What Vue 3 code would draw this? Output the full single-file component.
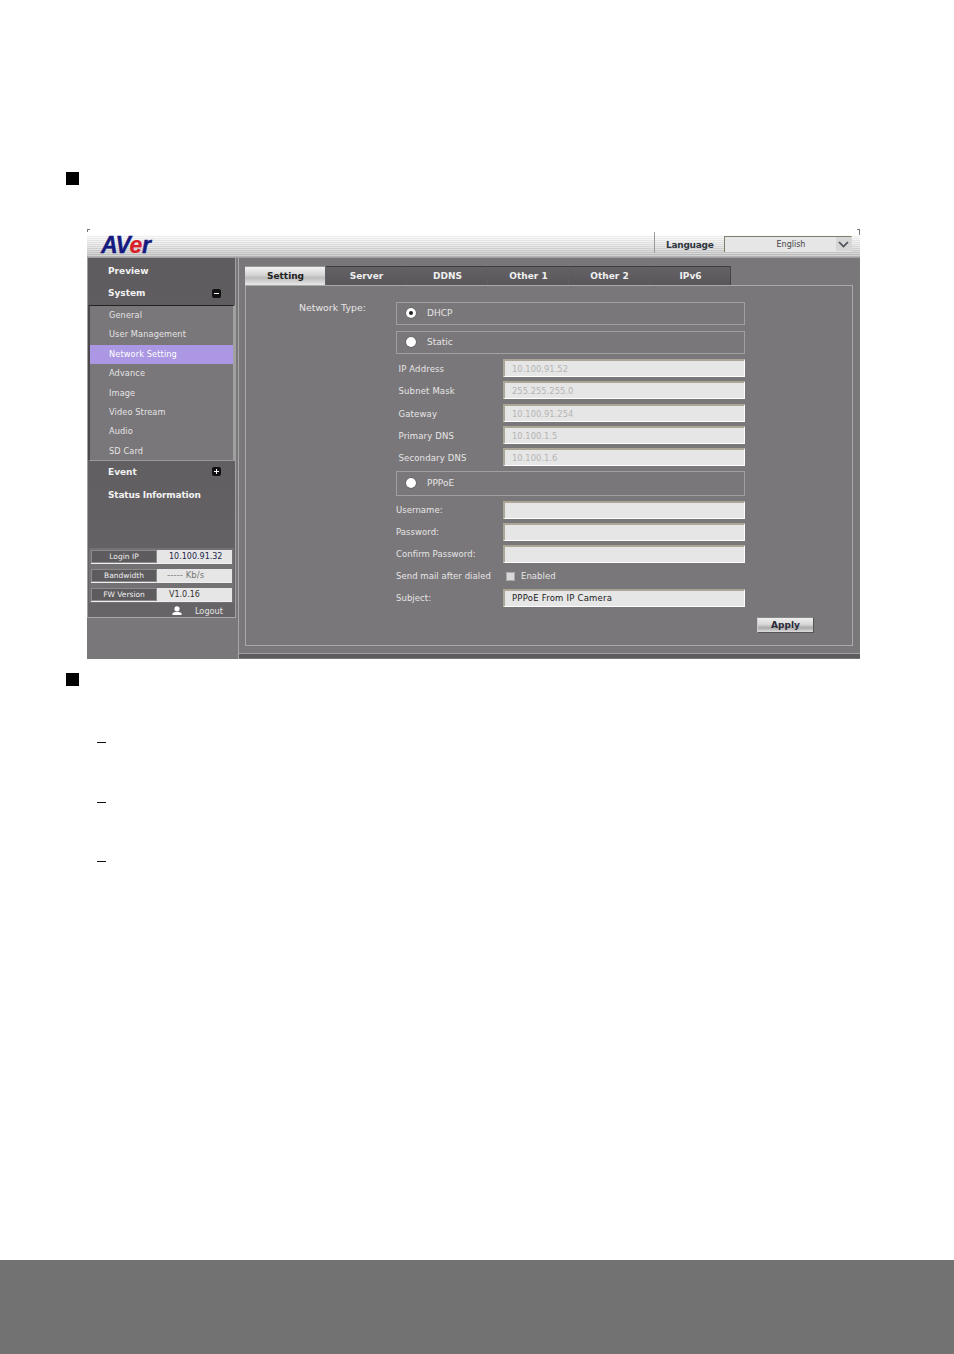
<script setup>
const subs = [
  { t: 'General' }, { t: 'User Management' }, { t: 'Network Setting', on: true }, { t: 'Advance' },
  { t: 'Image' }, { t: 'Video Stream' }, { t: 'Audio' }, { t: 'SD Card' }
]
const tabs = ['Setting', 'Server', 'DDNS', 'Other 1', 'Other 2', 'IPv6']
const net = [
  ['IP Address', '10.100.91.52'], ['Subnet Mask', '255.255.255.0'], ['Gateway', '10.100.91.254'],
  ['Primary DNS', '10.100.1.5'], ['Secondary DNS', '10.100.1.6']
]
</script>

<template>
  <div class="page">
    <main class="doc">
      <div class="bullet first"></div>
      <section class="app">
        <div class="ticks"><i class="tick"></i><i class="tick r"></i></div>
        <header class="head">
          <div class="logo">AV<span class="e">e</span>r</div>
          <div class="lang">
            <span class="lang-label">Language</span>
            <div class="select"><span class="sel-text">English</span>
              <span class="sel-btn"><svg width="11" height="7" viewBox="0 0 11 7"><path d="M1 1l4.5 4.5L10 1" fill="none" stroke="#4a4e56" stroke-width="1.7"/></svg></span>
            </div>
          </div>
        </header>
        <div class="body">
          <aside class="side">
            <div class="side-box">
              <div class="nav">Preview</div>
              <div class="nav sys">System<span class="sq"><b class="h"></b></span></div>
              <ul class="subs">
                <li v-for="s in subs" :key="s.t" :class="{ on: s.on }">{{ s.t }}</li>
              </ul>
              <div class="nav ev">Event<span class="sq"><b class="h"></b><b class="v"></b></span></div>
              <div class="nav status">Status Information</div>
              <div class="info">
                <div class="irow"><span class="ik">Login IP</span><span class="iv dark">10.100.91.32</span></div>
                <div class="irow"><span class="ik">Bandwidth</span><span class="iv kb">----- Kb/s</span></div>
                <div class="irow"><span class="ik">FW Version</span><span class="iv">V1.0.16</span></div>
              </div>
              <div class="logout">
                <svg width="10" height="9" viewBox="0 0 10 9"><circle cx="5" cy="2.8" r="2.6" fill="#fff"/><path d="M.5 9V7.6C.5 6.6 2.2 6 5 6s4.500 .6 4.500 1.600V9z" fill="#fff"/></svg>
                <span>Logout</span>
              </div>
            </div>
          </aside>
          <section class="main">
            <nav class="tabs">
              <span v-for="(t, i) in tabs" :key="t" class="tab" :class="{ active: i === 0 }">{{ t }}</span>
            </nav>
            <div class="panel">
              <div class="type-label">Network Type:</div>
              <div class="form">
                <div class="opt"><i class="radio sel"></i>DHCP</div>
                <div class="opt gap6"><i class="radio"></i>Static</div>
                <div v-for="n in net" :key="n[0]" class="row net">
                  <label>{{ n[0] }}</label>
                  <div class="inp muted">{{ n[1] }}</div>
                </div>
                <div class="opt pp"><i class="radio"></i>PPPoE</div>
                <div class="row first-pp"><label>Username:</label><div class="inp"></div></div>
                <div class="row"><label>Password:</label><div class="inp"></div></div>
                <div class="row"><label>Confirm Password:</label><div class="inp"></div></div>
                <div class="row check"><label>Send mail after dialed</label><i class="cb"></i><span>Enabled</span></div>
                <div class="row subj"><label>Subject:</label><div class="inp filled">PPPoE From IP Camera</div></div>
                <div class="actions"><button class="apply" type="button">Apply</button></div>
              </div>
            </div>
            <div class="band"></div>
          </section>
        </div>
      </section>
      <div class="bullet second"></div>
      <div class="dash d1"></div>
      <div class="dash d2"></div>
      <div class="dash d3"></div>
    </main>
    <footer class="foot"></footer>
  </div>
</template>

<style>
html, body { margin: 0; background: #fff; }
</style>

<style scoped>
.page { width: 954px; height: 1354px; display: flex; flex-direction: column; background: #fff; font-family: "DejaVu Sans", Verdana, sans-serif; overflow: hidden; }
.doc { height: 1260px; padding-top: 172px; box-sizing: border-box; }
.foot { height: 94px; background: #727272; }
.bullet { width: 13px; height: 13px; background: #000; margin-left: 66px; }
.second { margin-top: 14px; }
.dash { width: 9px; height: 1px; background: #111; margin-left: 97px; }
.d1 { margin-top: 56px; }
.d2 { margin-top: 59px; }
.d3 { margin-top: 58px; }

.app { width: 773px; height: 430px; margin: 44px 0 0 87px; display: flex; flex-direction: column; }
.ticks { height: 6px; display: flex; justify-content: space-between; }
.tick { width: 2px; height: 2px; border-left: 1px solid #777; border-top: 1px solid #777; }
.tick.r { border-left: 0; border-right: 1px solid #777; height: 5px; }

.head { height: 23px; display: flex; justify-content: space-between; background: repeating-linear-gradient(180deg, rgba(255,255,255,.35) 0 1px, rgba(0,0,0,.03) 1px 2px), linear-gradient(180deg, #fafafa 0%, #e2e2e2 45%, #b8b8b8 100%); border-bottom: 1px solid #a0a0a0; box-sizing: border-box; }
.logo { margin-left: 14px; width: 60px; font: italic 700 23px/20px "Liberation Sans", sans-serif; letter-spacing: -.4px; color: #141a80; -webkit-text-stroke: .4px #141a80; }
.e { color: #d9202a; -webkit-text-stroke: .2px #d9202a; }
.lang { display: flex; align-items: flex-start; }
.lang-label { width: 70px; height: 21px; margin-top: -3px; padding: 3px 0 0 11px; box-sizing: border-box; border-left: 1px solid #9a9a9a; font-size: 9px; font-weight: 700; letter-spacing: -.27px; line-height: 21px; color: #2f3640; }
.select { width: 128px; height: 16px; margin: 1px 8px 0 0; display: flex; background: #e6e6e6; border-top: 1px solid #7f7d68; border-left: 1px solid #7f7d68; border-right: 1px solid #d8d8d8; box-sizing: border-box; }
.sel-text { flex: 1; font-size: 8px; line-height: 15px; text-align: center; color: #444; padding-left: 21px; }
.sel-btn { width: 15px; height: 14px; background: #d6d6d6; display: flex; align-items: center; justify-content: center; }

.body { flex: 1; display: flex; background: #7a777a; min-height: 0; }
.side { width: 149px; flex: none; }
.side-box { height: 360px; box-sizing: border-box; background: linear-gradient(180deg, #5e5c5f, #625f62 60%, #676467); border-left: 1px solid #a0a0a0; border-right: 1px solid #a0a0a0; border-bottom: 1px solid #a8a8a8; padding-top: 2px; }
.nav { height: 22px; box-sizing: border-box; padding: 0 13px 0 20px; display: flex; justify-content: space-between; align-items: center; font-size: 9px; font-weight: 700; color: #f2f2f2; white-space: nowrap; }
.nav.sys { height: 23px; padding-bottom: 1px; }
.status { letter-spacing: -.17px; height: 23px; }
.sq { width: 9px; height: 9px; background: #111; border-radius: 2px; border: 0; position: relative; margin-right: 1px; }
.sq b { position: absolute; background: #fff; }
.sq .h { left: 2px; right: 2px; top: 4px; height: 1px; }
.sq .v { left: 4px; top: 2px; bottom: 2px; width: 1px; }
.subs { list-style: none; margin: 0; padding: 0; height: 156px; background: #7a777a; border-top: 1px solid #222; border-left: 2px solid #4a484b; border-right: 2px solid #a0a0a0; border-bottom: 1px solid #999; box-sizing: border-box; }
.subs li { height: 19.4px; padding-left: 19px; font-size: 8.2px; letter-spacing: .12px; line-height: 19.4px; color: #e4e4e4; white-space: nowrap; }
.subs li.on { background: #ab97e4; color: #fff; }
.ev { height: 23px; margin-top: -1px; }
.info { margin: 42px 1px 0; height: 55px; padding: 2px 2px; background: #747174; box-sizing: border-box; display: flex; flex-direction: column; gap: 5px; }
.irow { height: 14px; display: flex; border-bottom: 1px solid #eee; font-size: 7.5px; line-height: 13px; }
.ik { width: 66px; background: #5d5b5e; color: #eee; text-align: center; border: 1px solid #8b8b8b; box-sizing: border-box; line-height: 11px; white-space: nowrap; }
.iv { flex: 1; background: #e6e6e6; padding-left: 12px; color: #333; font-size: 8px; white-space: nowrap; }
.iv.dark { color: #22244a; }
.iv.kb { color: #777; padding-left: 10px; font-size: 8.5px; letter-spacing: .1px; }
.logout { height: 15px; display: flex; justify-content: flex-end; align-items: center; gap: 13px; padding-right: 12px; font-size: 8.2px; color: #e4e4e4; }

.main { flex: 1; position: relative; border-left: 1px solid #a8a8a8; margin-left: 2px; box-sizing: border-box; padding: 8px 0 0 6px; display: flex; flex-direction: column; }
.tabs { height: 19px; display: flex; }
.tab { width: 81px; padding-left: 1px; text-align: center; font: 700 9px/19px "DejaVu Sans", sans-serif; color: #f0f0f0; background: linear-gradient(180deg, #646265, #58565a); border-top: 1px solid #3e3c3f; box-sizing: border-box; border-right: 1px solid #605e62; }
.tab:last-child { border-right: 1px solid #444; }
.tab.active { color: #222; background: linear-gradient(180deg, #f2f2f2 0%, #d4d4d4 45%, #bcbcbc 60%, #e8e8e8 100%); border-top: 1px solid #999; }
.panel { width: 608px; height: 361px; box-sizing: border-box; border: 1px solid #a9a9a9; display: flex; padding: 16px 0 0 53px; }
.type-label { width: 97px; font-size: 9.4px; line-height: 11px; color: #e6e6e6; white-space: nowrap; }
.form { width: 349px; display: flex; flex-direction: column; }
.opt { height: 20px; padding-bottom: 1px; width: 337px; border: 1px solid #a0a0a0; box-sizing: content-box; display: flex; align-items: center; font-size: 9px; color: #e6e6e6; padding-left: 10px; margin-right: -10px; gap: 10px; }
.gap6 { margin-top: 6px; }
.pp { margin-top: 4.7px; height: 23px; padding-bottom: 0; }
.radio { width: 10px; height: 10px; margin-left: -1px; margin-right: 1px; border-radius: 50%; background: #fff; box-shadow: 0 0 0 .5px #555; display: flex; align-items: center; justify-content: center; flex: none; }
.radio.sel::after { content: ""; width: 4px; height: 4px; border-radius: 50%; background: #222; }
.row { display: flex; align-items: center; height: 18px; margin-top: 4.2px; font-size: 8.5px; letter-spacing: .05px; color: #e6e6e6; }
.row.net { margin-top: 4.3px; }
.row.net:nth-child(3) { margin-top: 5px; }
.row label { width: 107px; flex: none; white-space: nowrap; }
.net label { padding-left: 2.5px; width: 104.5px; letter-spacing: .15px; margin-top: 2px; }
.inp { flex: 1; height: 18px; box-sizing: border-box; margin-left: 0; background: #e6e6e6; border-top: 2px solid #aca697; border-left: 2px solid #aca697; border-right: 1px solid #fff; border-bottom: 1px solid #fff; padding-left: 7px; font-size: 8.3px; line-height: 16px; color: #b4b4b4; white-space: nowrap; }
.first-pp { margin-top: 5px; }
.check { height: 14px; margin-top: 6px; }
.cb { width: 9px; height: 9px; margin-left: 3px; background: #d8d8d8; border: 1px solid #aaa; box-sizing: border-box; }
.check span { margin-left: 6px; }
.subj { margin-top: 6px; }
.filled { color: #222; font-size: 8.5px; line-height: 15px; letter-spacing: .22px; }
.actions { display: flex; justify-content: flex-end; margin: 10px -69px 0 0; }
.apply { width: 57px; height: 16px; padding: 0; border: 1px solid #555; border-top-color: #888; border-left-color: #ccc; background: linear-gradient(180deg, #eee 0%, #d8d8d8 45%, #aaa 70%, #ddd 100%); font: 700 9px/14px "DejaVu Sans", sans-serif; color: #2a2a3a; }
.band { margin: 7px 0 0 -6px; background: #5d5b5e; border-top: 1px solid #a0a0a0; height: 4px; }
</style>
